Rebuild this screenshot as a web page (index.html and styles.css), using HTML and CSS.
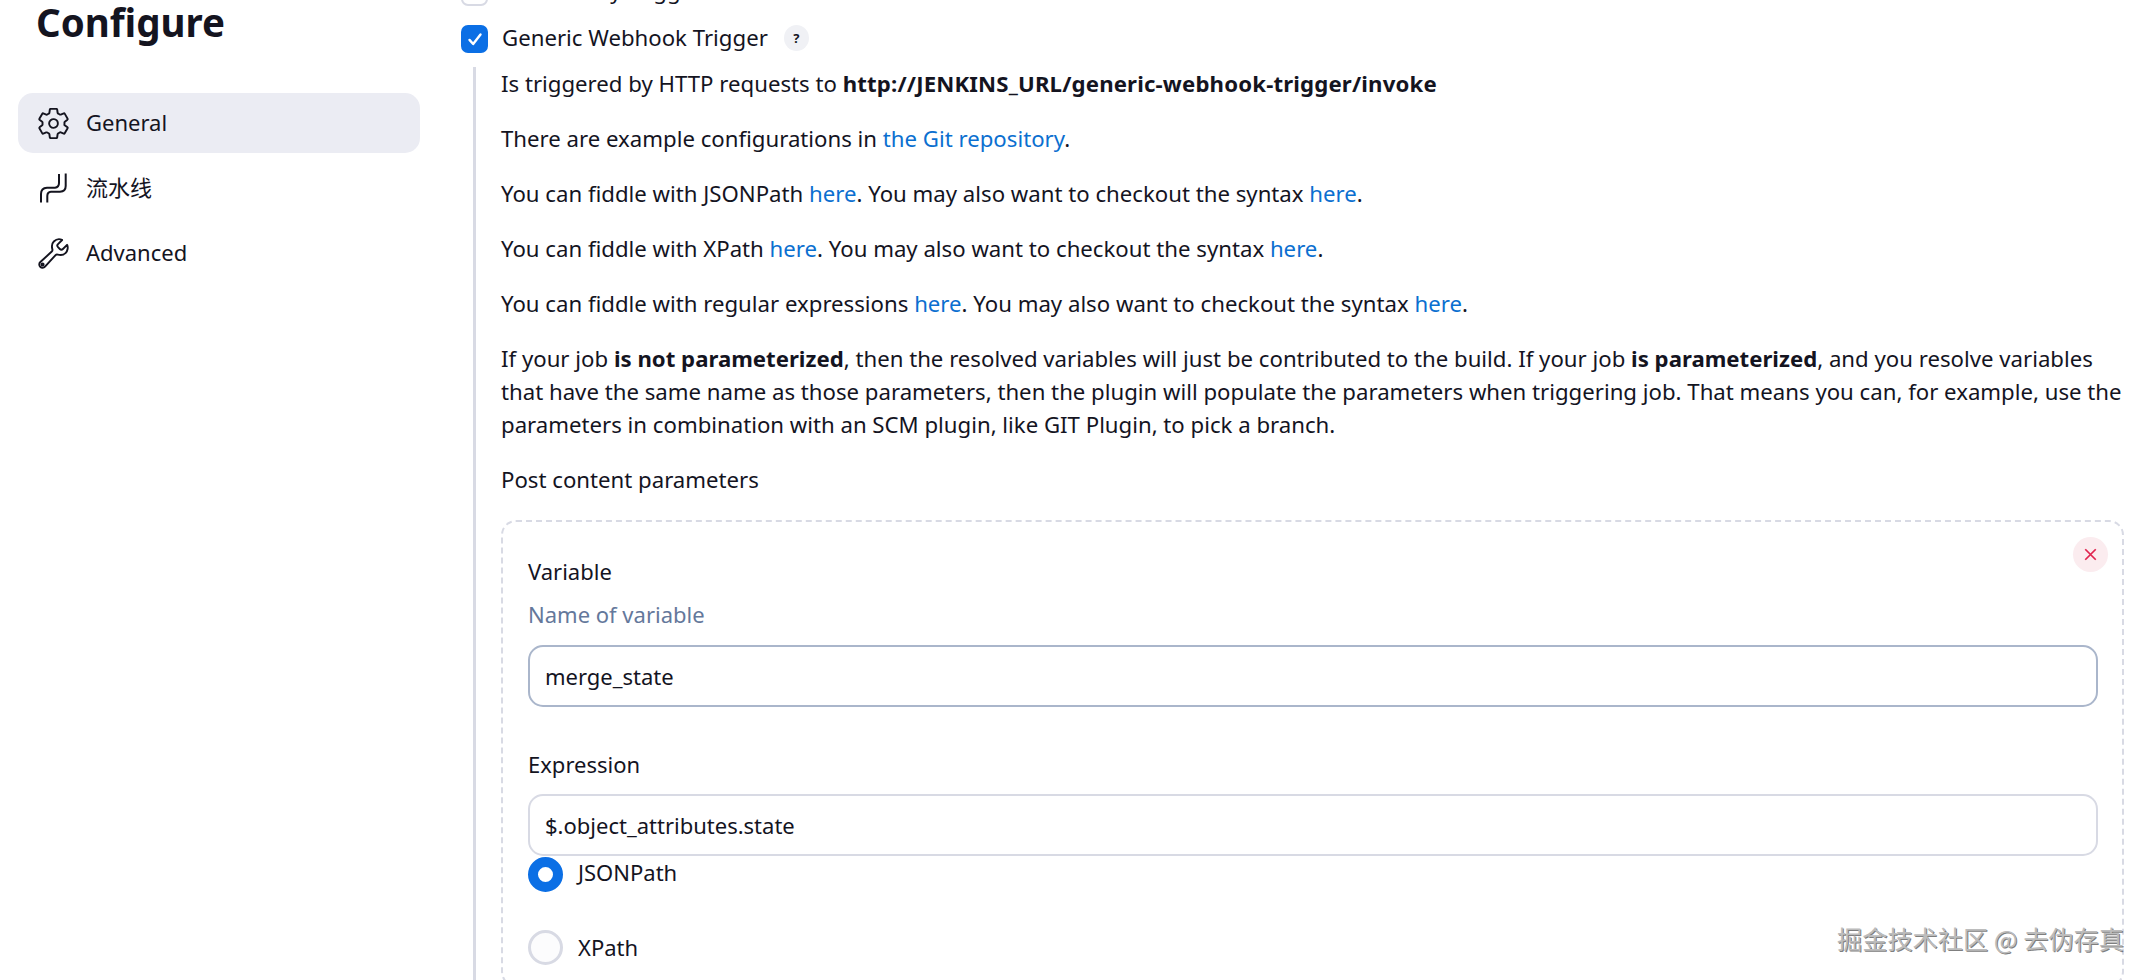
FILE: index.html
```html
<!DOCTYPE html>
<html lang="en">
<head>
    <meta charset="UTF-8">
    <meta name="viewport" content="width=device-width, initial-scale=1.0">
    <title>Configure</title>
    <link rel="stylesheet" href="styles.css">
</head>
<body>

    <div class="page">
        <!-- Side panel -->
        <div class="sidebar">
            <h1 class="page-title">Configure</h1>
            <div class="side-item active">
                <svg class="side-icon ion" viewBox="0 0 512 512"><path d="M262.29 192.31a64 64 0 1057.4 57.4 64.13 64.13 0 00-57.4-57.4zM416.39 256a154.34 154.34 0 01-1.53 20.79l45.21 35.46a10.81 10.81 0 012.45 13.75l-42.77 74a10.81 10.81 0 01-13.14 4.59l-44.9-18.08a16.11 16.11 0 00-15.17 1.75A164.48 164.48 0 01325 400.8a15.94 15.94 0 00-8.82 12.14l-6.73 47.89a11.08 11.08 0 01-10.68 9.17h-85.54a11.11 11.11 0 01-10.69-8.87l-6.72-47.82a16.07 16.07 0 00-9-12.22 155.3 155.3 0 01-21.46-12.57 16 16 0 00-15.11-1.71l-44.89 18.07a10.81 10.81 0 01-13.14-4.58l-42.77-74a10.8 10.8 0 012.45-13.75l38.21-30a16.05 16.05 0 006-14.08c-.36-4.17-.58-8.33-.58-12.5s.21-8.27.58-12.35a16 16 0 00-6.07-13.94l-38.19-30A10.81 10.81 0 0149.48 186l42.77-74a10.81 10.81 0 0113.14-4.59l44.9 18.08a16.11 16.11 0 0015.17-1.75A164.48 164.48 0 01187 111.2a15.94 15.94 0 008.82-12.14l6.73-47.89A11.08 11.08 0 01213.23 42h85.54a11.11 11.11 0 0110.69 8.87l6.72 47.82a16.07 16.07 0 009 12.22 155.3 155.3 0 0121.46 12.57 16 16 0 0015.11 1.71l44.89-18.07a10.81 10.81 0 0113.14 4.58l42.77 74a10.8 10.8 0 01-2.45 13.75l-38.21 30a16.05 16.05 0 00-6.05 14.08c.33 4.14.55 8.3.55 12.47z"/></svg>
                <span>General</span>
            </div>
            <div class="side-item">
                <svg class="side-icon pipe" viewBox="0 0 30 30"><path d="M3 29.5V21Q3 15 9 14.7H17Q21 14.3 21 10V1"/><path d="M9.3 29.5V23Q9.3 19 13 18.7H22Q27.7 18.5 27.7 13V0.5"/></svg>
                <span>流水线</span>
            </div>
            <div class="side-item">
                <svg class="side-icon ion" viewBox="0 0 512 512"><path d="M393.87 190a32.1 32.1 0 01-45.25 0l-26.57-26.57a32.09 32.09 0 010-45.26L382.19 58a1 1 0 00-.3-1.64c-38.82-16.64-89.15-8.16-121.11 23.57-30.58 30.35-32.32 76-21.12 115.84a31.93 31.93 0 01-9.06 32.08L64 380a48.17 48.17 0 1068 68l153.86-167a31.93 31.93 0 0131.6-9.13c39.54 10.59 84.54 8.6 114.72-21.19 32.49-32 39.5-88.56 23.75-120.93a1 1 0 00-1.6-.26z"/><circle cx="96" cy="416" r="16"/></svg>
                <span>Advanced</span>
            </div>
        </div>

        <!-- Trigger settings -->
        <div class="main">
            <div class="check-row">
                <span class="checkbox"></span>
                <span class="check-label">Periodically Trigger</span>
            </div>
            <div class="check-row">
                <span class="checkbox checked">
                    <svg viewBox="0 0 24 24"><path d="M6 13l4 4.5 8-10.5"/></svg>
                </span>
                <span class="check-label">Generic Webhook Trigger</span>
                <span class="help-btn">?</span>
            </div>

            <div class="nested">
                <p>Is triggered by HTTP requests to <strong class="url-text">http://JENKINS_URL/generic-webhook-trigger/invoke</strong></p>
                <p>There are example configurations in <a href="#">the Git repository</a>.</p>
                <p>You can fiddle with JSONPath <a href="#">here</a>. You may also want to checkout the syntax <a href="#">here</a>.</p>
                <p>You can fiddle with XPath <a href="#">here</a>. You may also want to checkout the syntax <a href="#">here</a>.</p>
                <p>You can fiddle with regular expressions <a href="#">here</a>. You may also want to checkout the syntax <a href="#">here</a>.</p>
                <p>If your job <strong>is not parameterized</strong>, then the resolved variables will just be contributed to the build. If your job <strong>is parameterized</strong>, and you resolve variables that have the same name as those parameters, then the plugin will populate the parameters when triggering job. That means you can, for example, use the parameters in combination with an SCM plugin, like GIT Plugin, to pick a branch.</p>
                <p>Post content parameters</p>

                <div class="repeat-card">
                    <button class="delete-btn">
                        <svg viewBox="0 0 24 24"><path d="M6 6l12 12M18 6L6 18"/></svg>
                    </button>
                    <div class="field-label">Variable</div>
                    <div class="field-help">Name of variable</div>
                    <div class="text-input focused">merge_state</div>
                    <div class="field-label second">Expression</div>
                    <div class="text-input second">$.object_attributes.state</div>
                    <div class="radio-row first">
                        <span class="radio on"></span>
                        <span class="radio-label">JSONPath</span>
                    </div>
                    <div class="radio-row">
                        <span class="radio"></span>
                        <span>XPath</span>
                    </div>
                </div>
            </div>
        </div>
    </div>

    <div class="watermark">掘金技术社区 @ 去伪存真</div>

</body>
</html>
```

FILE: styles.css
```css
html, body {
    height: 100%;
    overflow: hidden;
}

body {
    margin: 0;
    background-color: white;
    color: #14141f;
    font-family: "Noto Sans", "Noto Sans CJK SC", sans-serif;
    font-size: 22px;
    line-height: 33px;
}

.page {
    display: flex;
    height: 980px;
    overflow: hidden;
}

/* Side panel */
.sidebar {
    width: 402px;
    margin-left: 18px;
    margin-right: 41px;
    flex-shrink: 0;
}

.page-title {
    margin: -2px 0 0 18px;
    height: 95px;
    font-size: 38.5px;
    font-weight: 700;
    line-height: 48px;
}

.side-item {
    display: flex;
    align-items: center;
    gap: 18px;
    height: 60px;
    margin-bottom: 5px;
    padding-left: 20px;
    border-radius: 15px;
}

.side-item span {
    margin-bottom: 2px;
}

.side-item.active {
    background-color: #ebecf3;
}

.side-icon {
    width: 30px;
    height: 30px;
    fill: none;
    stroke: #14141f;
    stroke-linecap: round;
    stroke-linejoin: round;
}

/* the outline icons have empty room inside their viewBox */
.side-icon.ion {
    width: 35px;
    height: 35px;
    margin: 0 -2.5px;
    stroke-width: 28;
}

.side-icon.pipe {
    stroke-width: 2;
    stroke-linecap: butt;
}

/* Main column */
.main {
    flex: 1;
    min-width: 0;
    margin-right: 27px;
    margin-top: -31px;
}

.check-row {
    display: flex;
    align-items: center;
    height: 46px;
    gap: 14px;
    margin-bottom: 1px;
    font-size: 22.2px;
}

.check-label {
    margin-bottom: 3px;
}

.checkbox {
    width: 27px;
    height: 28px;
    box-sizing: border-box;
    border: 2px solid #d8dae4;
    border-radius: 7px;
    display: flex;
    align-items: center;
    justify-content: center;
    flex-shrink: 0;
}

.checkbox.checked {
    background-color: #0b6fe5;
    border-color: #0b6fe5;
}

.checkbox svg {
    width: 22px;
    height: 22px;
    fill: none;
    stroke: white;
    stroke-width: 2.6;
    stroke-linecap: round;
    stroke-linejoin: round;
}

.help-btn {
    width: 25px;
    height: 26px;
    margin-left: 2px;
    margin-bottom: 2px;
    border-radius: 50%;
    background-color: #f0f1f5;
    font-size: 13px;
    font-weight: 700;
    line-height: 26px;
    text-align: center;
}

.nested {
    margin-top: 5px;
    margin-left: 12px;
    padding-left: 25px;
    border-left: 3px solid #d8dae4;
}

.nested p {
    margin: 0 0 22px;
    font-size: 22.2px;
}

.nested a {
    color: #0b6fd0;
    text-decoration: none;
}

.url-text {
    letter-spacing: 0.16px;
}

/* Repeatable card */
.repeat-card {
    position: relative;
    margin-top: 24px;
    padding: 33px 24px 20px 25px;
    border: 2px dashed #d8dae4;
    border-radius: 15px;
}

.delete-btn {
    position: absolute;
    top: 15px;
    right: 14px;
    width: 35px;
    height: 35px;
    padding: 7px;
    border: none;
    border-radius: 50%;
    background-color: #fbecef;
}

.delete-btn svg {
    display: block;
    fill: none;
    stroke: #e0244f;
    stroke-width: 2;
}

.field-help {
    margin-top: 10px;
    color: #64789b;
}

.text-input {
    box-sizing: border-box;
    height: 62px;
    margin-top: 14px;
    padding: 0 15px;
    border: 2px solid #d8dae4;
    border-radius: 15px;
    line-height: 58px;
}

.text-input.second {
    margin-top: 13px;
}

.text-input.focused {
    border-color: #aab6cb;
}

.field-label.second {
    margin-top: 41px;
}

.radio-row {
    display: flex;
    align-items: center;
    gap: 15px;
    height: 35px;
    margin-top: 38px;
}

.radio-row.first {
    margin-top: 1px;
}

.radio-label {
    margin-bottom: 4px;
}

.radio {
    width: 35px;
    height: 35px;
    box-sizing: border-box;
    border: 3px solid #d8dae4;
    border-radius: 50%;
    background-color: #fcfcfd;
    flex-shrink: 0;
}

.radio.on {
    border: 10px solid #0b6fe5;
    background-color: white;
}

.watermark {
    position: absolute;
    right: 27px;
    top: 921px;
    color: #bcbcbc;
    font-family: "Noto Sans CJK SC", sans-serif;
    font-size: 25.2px;
    line-height: 34px;
    text-shadow: 1px 1px 0 rgba(70, 70, 70, 0.7);
}
```
